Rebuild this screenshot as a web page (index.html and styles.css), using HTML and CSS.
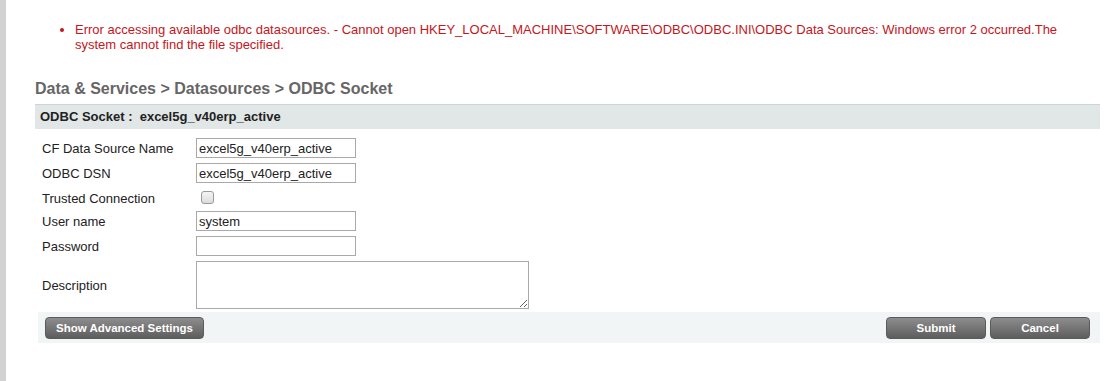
FILE: index.html
```html
<!DOCTYPE html>
<html lang="en">
<head>
    <meta charset="UTF-8">
    <title>ODBC Socket</title>
    <link rel="stylesheet" href="styles.css">
</head>
<body>
    <div class="page">
        <ul class="errors">
            <li>Error accessing available odbc datasources. - Cannot open HKEY_LOCAL_MACHINE\SOFTWARE\ODBC\ODBC.INI\ODBC Data Sources: Windows error 2 occurred.The system cannot find the file specified.</li>
        </ul>
        <h2 class="crumbs">Data &amp; Services &gt; Datasources &gt; ODBC Socket</h2>
        <div class="panel">
            <div class="panel-title">ODBC Socket :&nbsp; excel5g_v40erp_active</div>
            <div class="form">
                <label class="lbl">CF Data Source Name</label>
                <div class="fld"><input class="txt" type="text" value="excel5g_v40erp_active"></div>
                <label class="lbl">ODBC DSN</label>
                <div class="fld"><input class="txt" type="text" value="excel5g_v40erp_active"></div>
                <label class="lbl">Trusted Connection</label>
                <div class="fld"><span class="check"></span></div>
                <label class="lbl">User name</label>
                <div class="fld"><input class="txt" type="text" value="system"></div>
                <label class="lbl">Password</label>
                <div class="fld"><input class="txt" type="password"></div>
                <label class="lbl tall">Description</label>
                <div class="fld"><textarea class="area"></textarea></div>
            </div>
            <div class="buttons">
                <button class="btn">Show Advanced Settings</button>
                <div class="right">
                    <button class="btn wide">Submit</button>
                    <button class="btn wide">Cancel</button>
                </div>
            </div>
        </div>
    </div>
</body>
</html>
```

FILE: styles.css
```css
body {
    margin: 0;
    font-family: "Liberation Sans", Arial, sans-serif;
    font-size: 13px;
    color: #222;
    background: #fff;
}
.page {
    border-left: 6px solid #d2d2d2;
    min-height: 381px;
    box-sizing: border-box;
    padding: 0 4px 0 29px;
}
.errors {
    margin: 0;
    padding: 22px 0 0 40px;
    color: #c4161c;
    font-size: 13px;
    line-height: 15px;
    list-style: disc;
}
.crumbs {
    margin: 0;
    padding-top: 28px;
    font-size: 16px;
    line-height: 18px;
    color: #666;
    font-weight: bold;
}
.panel {
    margin-top: 6px;
}
.panel-title {
    background: #e1e6e6;
    border-top: 1px solid #c9d6d6;
    height: 24px;
    line-height: 24px;
    padding-left: 5px;
    font-weight: bold;
    color: #222;
}
.form {
    display: grid;
    grid-template-columns: 154px auto;
    grid-template-rows: 25px 25px 23px 25px 25px 48px;
    padding: 9px 0 0 7px;
}
.lbl {
    display: flex;
    align-items: center;
    height: 20px;
}
.lbl.tall {
    height: 48px;
}
.txt {
    box-sizing: border-box;
    width: 160px;
    height: 20px;
    margin: 0;
    border: 1px solid #a9a9a9;
    padding: 0 2px;
    font-family: "Liberation Sans", Arial, sans-serif;
    font-size: 13px;
    color: #222;
}
.check {
    display: block;
    width: 11px;
    height: 11px;
    margin: 3px 0 0 5px;
    border: 1px solid #9a9a9a;
    border-radius: 3px;
    background: linear-gradient(#f4f4f4, #dcdcdc);
}
.area {
    box-sizing: border-box;
    width: 333px;
    height: 48px;
    margin: 0;
    border: 1px solid #a9a9a9;
    display: block;
}
.buttons {
    display: flex;
    justify-content: space-between;
    align-items: center;
    background: #f1f5f5;
    margin: 3px 0 0 3px;
    height: 31px;
    padding: 0 10px 0 7px;
}
.right {
    display: flex;
    gap: 4px;
}
.btn {
    height: 22px;
    padding: 0 10px;
    border: 1px solid #5b5b5b;
    border-radius: 4px;
    background: linear-gradient(#8d8d8d, #5d5d5d);
    color: #fff;
    font-family: "Liberation Sans", Arial, sans-serif;
    font-size: 11.5px;
    font-weight: bold;
    cursor: pointer;
}
.btn.wide {
    width: 100px;
}
```
